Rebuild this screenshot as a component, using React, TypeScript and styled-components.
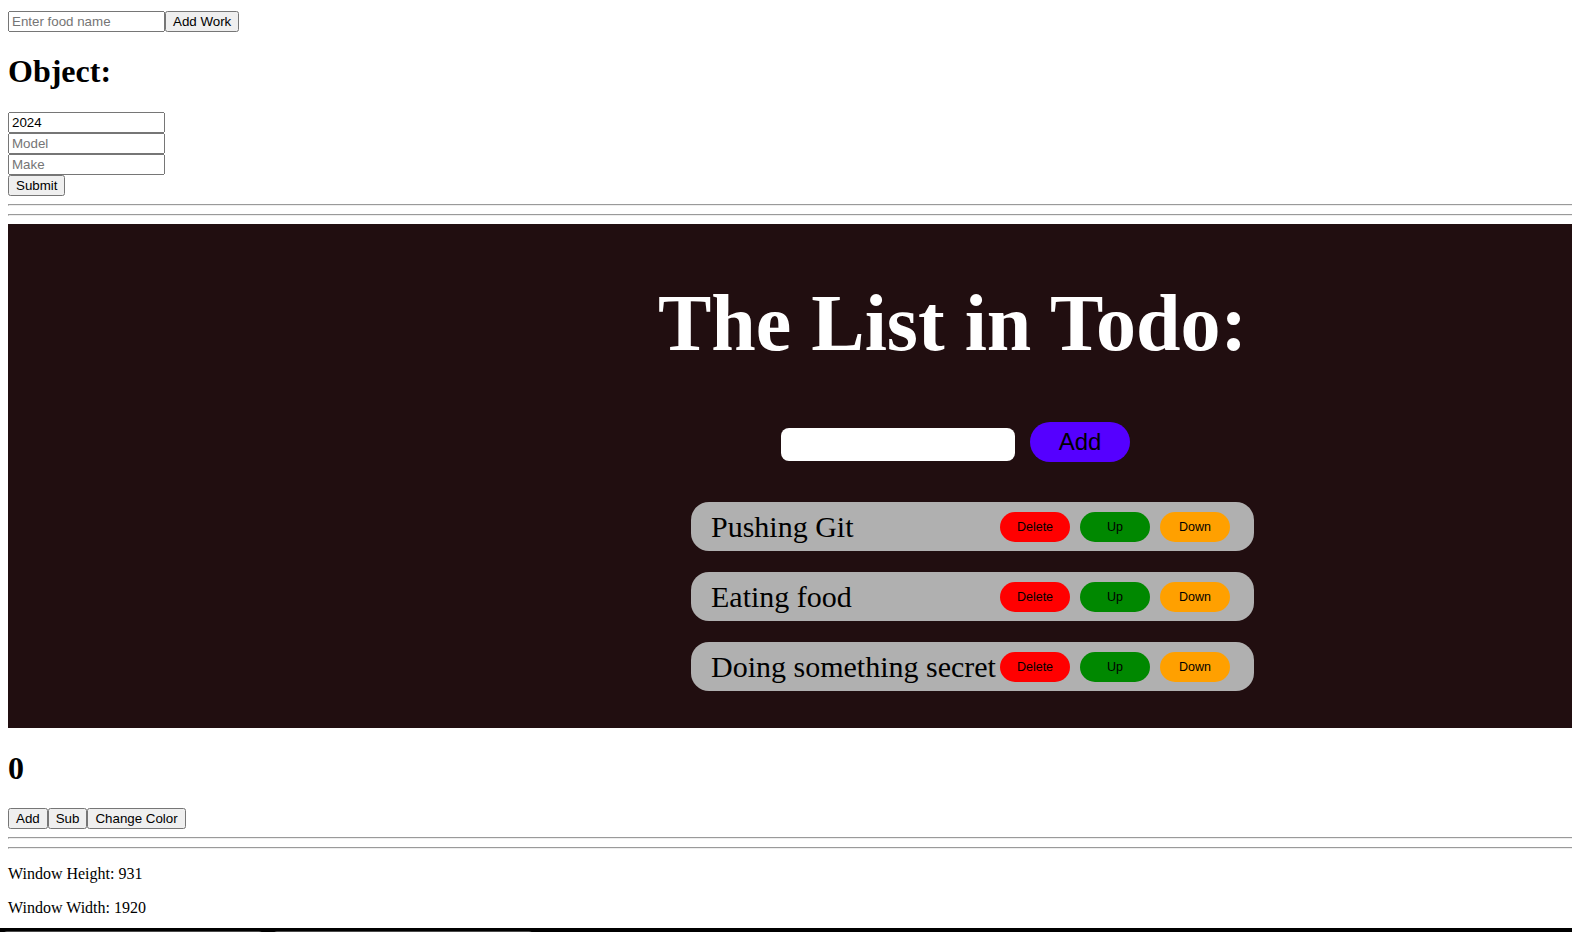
import React from "react";
import styled, { createGlobalStyle } from "styled-components";

const GlobalStyle = createGlobalStyle`
  html {
    overflow: hidden;
  }
  body {
    margin: 0;
    padding: 8px 0 8px 8px;
    overflow: hidden;
    font-family: "Liberation Serif", "Times New Roman", serif;
    color: #000;
    background: #fff;
  }
`;

const Page = styled.div`
  width: 1889px;
`;

const Line = styled.div<{ $top?: number }>`
  padding-top: ${({ $top }) => $top ?? 0}px;
`;

const Field = styled.input<{ $block?: boolean }>`
  display: ${({ $block }) => ($block ? "block" : "inline-block")};
  box-sizing: border-box;
  width: 157px;
  height: 21px;
  margin: 0;
  font-family: "Liberation Sans", Arial, sans-serif;
  font-size: 13.333px;
  &::placeholder {
    color: #757575;
  }
`;

const NativeButton = styled.button`
  margin: 0;
  font-family: "Liberation Sans", Arial, sans-serif;
  font-size: 13.333px;
`;

const Heading = styled.h1`
  font-size: 32px;
  font-weight: bold;
  margin: 21.44px 0;
`;

const Rule = styled.hr`
  margin: 8px 0;
`;

const TodoSection = styled.section`
  display: flex;
  flex-direction: column;
  align-items: center;
  background: #210e10;
`;

const TodoTitle = styled.h1`
  margin: 54.6px 0 53px;
  font-size: 80px;
  font-weight: bold;
  line-height: normal;
  color: #fff;
`;

const InputRow = styled.div`
  display: flex;
  align-items: flex-end;
  gap: 15px;
  padding-left: 6px;
`;

const TodoInput = styled.input`
  box-sizing: border-box;
  width: 234px;
  height: 33px;
  margin: 0 0 1px;
  border: none;
  border-radius: 8px;
  background: #fff;
  font-family: "Liberation Sans", Arial, sans-serif;
  font-size: 16px;
  outline: none;
`;

const AddButton = styled.button`
  width: 100px;
  height: 40px;
  border: none;
  border-radius: 20px;
  background: #5500ff;
  color: #000;
  font-family: "Liberation Sans", Arial, sans-serif;
  font-size: 24px;
  cursor: pointer;
`;

const TaskList = styled.ul`
  display: flex;
  flex-direction: column;
  gap: 21px;
  list-style: none;
  margin: 40px 0 37px;
  padding: 0 0 0 40px;
`;

const TaskItem = styled.li`
  box-sizing: border-box;
  display: flex;
  align-items: center;
  width: 563px;
  height: 49px;
  padding: 0 24px 0 20px;
  border-radius: 18px;
  background: #b0b0b0;
`;

const TaskText = styled.span`
  flex: 1;
  font-size: 30px;
  white-space: nowrap;
  color: #000;
`;

const Actions = styled.div`
  display: flex;
  gap: 10px;
`;

const PillButton = styled.button<{ $bg: string }>`
  width: 70px;
  height: 30px;
  padding: 0;
  border: none;
  border-radius: 15px;
  background: ${({ $bg }) => $bg};
  color: #000;
  font-family: "Liberation Sans", Arial, sans-serif;
  font-size: 12.5px;
  cursor: pointer;
`;

const Info = styled.p`
  margin: 16px 0;
  font-size: 16px;
`;

const Taskbar = styled.div`
  display: flex;
  gap: 10px;
  height: 40px;
  margin: -5px 0 0 -8px;
  padding: 3px 0 0 3px;
  background: #000;
`;

const TaskbarTab = styled.div`
  width: 258px;
  height: 30px;
  border: 1px solid #4a4a4a;
  border-radius: 4px;
  background: #2e2e2e;
`;

const tasks = ["Pushing Git", "Eating food", "Doing something secret"];

export default function App() {
  return (
    <Page>
      <GlobalStyle />
      <Line $top={3}>
        <Field placeholder="Enter food name" />
        <NativeButton>Add Work</NativeButton>
      </Line>

      <Heading>Object:</Heading>
      <Field $block defaultValue="2024" />
      <Field $block placeholder="Model" />
      <Field $block placeholder="Make" />
      <NativeButton>Submit</NativeButton>

      <Rule />
      <Rule />

      <TodoSection>
        <TodoTitle>The List in Todo:</TodoTitle>
        <InputRow>
          <TodoInput />
          <AddButton>Add</AddButton>
        </InputRow>
        <TaskList>
          {tasks.map((task) => (
            <TaskItem key={task}>
              <TaskText>{task}</TaskText>
              <Actions>
                <PillButton $bg="#ff0000">Delete</PillButton>
                <PillButton $bg="#008800">Up</PillButton>
                <PillButton $bg="#ffa000">Down</PillButton>
              </Actions>
            </TaskItem>
          ))}
        </TaskList>
      </TodoSection>

      <Heading>0</Heading>
      <Line>
        <NativeButton>Add</NativeButton>
        <NativeButton>Sub</NativeButton>
        <NativeButton>Change Color</NativeButton>
      </Line>

      <Rule />
      <Rule />

      <Info>Window Height: 931</Info>
      <Info>Window Width: 1920</Info>

      <Taskbar>
        <TaskbarTab />
        <TaskbarTab />
      </Taskbar>
    </Page>
  );
}
